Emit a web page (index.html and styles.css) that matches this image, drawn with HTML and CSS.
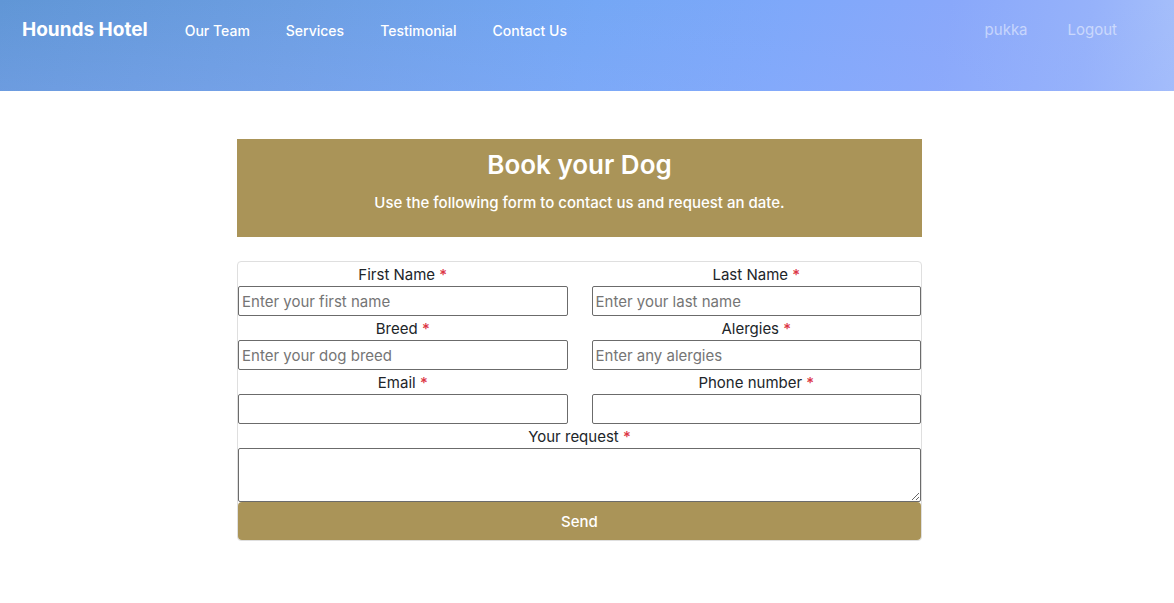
FILE: index.html
```html
<!DOCTYPE html>
<html lang="en">
<head>
<meta charset="utf-8">
<meta name="viewport" content="width=device-width, initial-scale=1">
<title>Hounds Hotel</title>
<link rel="stylesheet" href="styles.css">
</head>
<body>
<header class="site-header">
  <nav class="navbar">
    <a class="brand" href="#">Hounds Hotel</a>
    <ul class="nav-links">
      <li><a href="#team">Our Team</a></li>
      <li><a href="#services">Services</a></li>
      <li><a href="#testimonial">Testimonial</a></li>
      <li><a href="#contact">Contact Us</a></li>
    </ul>
    <ul class="account-links">
      <li><a href="#profile">pukka</a></li>
      <li><a href="#logout">Logout</a></li>
    </ul>
  </nav>
</header>
<main class="page">
  <div class="booking">
    <section class="banner">
      <h1>Book your Dog</h1>
      <p>Use the following form to contact us and request an date.</p>
    </section>
    <form class="card">
      <div class="fields">
        <div class="field">
          <label for="first">First Name <span class="required">*</span></label>
          <input id="first" type="text" placeholder="Enter your first name">
        </div>
        <div class="field">
          <label for="last">Last Name <span class="required">*</span></label>
          <input id="last" type="text" placeholder="Enter your last name">
        </div>
        <div class="field">
          <label for="breed">Breed <span class="required">*</span></label>
          <input id="breed" type="text" placeholder="Enter your dog breed">
        </div>
        <div class="field">
          <label for="alergies">Alergies <span class="required">*</span></label>
          <input id="alergies" type="text" placeholder="Enter any alergies">
        </div>
        <div class="field">
          <label for="email">Email <span class="required">*</span></label>
          <input id="email" type="email">
        </div>
        <div class="field">
          <label for="phone">Phone number <span class="required">*</span></label>
          <input id="phone" type="tel">
        </div>
        <div class="field wide">
          <label for="request">Your request <span class="required">*</span></label>
          <textarea id="request" rows="2"></textarea>
        </div>
      </div>
      <button class="send" type="submit">Send</button>
    </form>
  </div>
</main>
</body>
</html>
```
FILE: styles.css
```css
* { box-sizing: border-box; }

body {
  margin: 0;
  background: #fff;
  color: #212529;
  font-family: Inter, "Liberation Sans", sans-serif;
  font-size: 15px;
  line-height: 24px;
}

a { text-decoration: none; }

.site-header {
  padding: 14px 57px 45px 22px;
  background:
    linear-gradient(to bottom, rgba(120, 175, 255, 0), rgba(150, 175, 255, 0.22)),
    linear-gradient(100deg, #6096d6 0%, #6c9ee2 25%, #74a7f5 50%, #7ea8fa 66%, #89a8fa 80%, #96b2fa 92%, #a7c0fa 100%);
}

.navbar {
  display: flex;
  align-items: center;
}

.brand {
  color: #fff;
  font-size: 19px;
  font-weight: 700;
  line-height: 32px;
}

.nav-links,
.account-links {
  display: flex;
  margin: 0;
  padding: 0;
  list-style: none;
}

.nav-links {
  gap: 36px;
  margin-left: 37px;
  padding-top: 2px;
  font-size: 14px;
  font-weight: 500;
}

.nav-links a { color: #fff; }

.account-links {
  gap: 40px;
  margin-left: auto;
}

.account-links a { color: rgba(255, 255, 255, 0.5); }

.page { padding: 48px 15px 48px 0; }

.booking {
  max-width: 685px;
  margin: 0 auto;
  text-align: center;
}

.banner {
  margin-bottom: 24px;
  padding: 8px 8px 22px;
  background: #aa9458;
  color: #fff;
}

.banner h1 {
  margin: 0 0 8px;
  font-size: 26px;
  font-weight: 600;
  line-height: 36px;
}

.banner p {
  margin: 0;
  font-weight: 500;
}

.card {
  border: 1px solid #dfdfdf;
  border-radius: 4px;
}

.fields {
  display: grid;
  grid-template-columns: 1fr 1fr;
  column-gap: 24px;
}

.field {
  display: flex;
  flex-direction: column;
}

.field label {
  padding-top: 2px;
  line-height: 22px;
}

.wide { grid-column: 1 / -1; }

.required {
  color: #dc3545;
  font-weight: 500;
}

.field input,
.field textarea {
  width: 100%;
  margin: 0;
  padding: 2px 3px;
  border: 1px solid #6b6b6b;
  border-radius: 2px;
  background: #fff;
  color: #212529;
  font: inherit;
}

.field input { height: 30px; }

.field textarea {
  height: 54px;
  resize: vertical;
}

.field ::placeholder {
  color: #757575;
  opacity: 1;
}

.send {
  display: block;
  width: 100%;
  padding: 8px 12px 6px;
  border: 0;
  border-radius: 4px;
  background: #aa9458;
  color: #fff;
  font: inherit;
  font-weight: 500;
}
```
